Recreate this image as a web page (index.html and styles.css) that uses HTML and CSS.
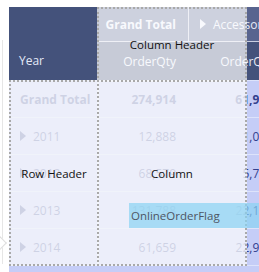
FILE: index.html
```html
<!DOCTYPE html>
<html>
<head>
    <title>Matrix field wells</title>
    <link rel="stylesheet" href="styles.css">
</head>
<body>
    <div id="page">
        <div class="pane-edge"></div>
        <div class="pane-tip"></div>

        <div id="matrix">
            <div class="cell corner">Year</div>
            <div class="cell head top num">Grand Total</div>
            <div class="cell head top split"><span class="caret"></span>Accessories</div>
            <div class="cell head num">OrderQty</div>
            <div class="cell head num">OrderQty</div>

            <div class="cell row bold">Grand Total</div>
            <div class="cell val bold">274,914</div>
            <div class="cell val bold">61,932</div>

            <div class="cell row"><span class="caret"></span>2011</div>
            <div class="cell val">12,888</div>
            <div class="cell val">1,017</div>

            <div class="cell row"><span class="caret"></span>2012</div>
            <div class="cell val">68,579</div>
            <div class="cell val">5,763</div>

            <div class="cell row"><span class="caret"></span>2013</div>
            <div class="cell val">131,788</div>
            <div class="cell val">22,152</div>

            <div class="cell row"><span class="caret"></span>2014</div>
            <div class="cell val">61,659</div>
            <div class="cell val">22,931</div>

            <div class="cell row"></div>
            <div class="cell val"></div>
            <div class="cell val"></div>
        </div>

        <div class="well well-colhead">Column Header</div>
        <div class="well well-rowhead">Row Header</div>
        <div class="well well-values">Column</div>

        <div class="ghost">OnlineOrderFlag</div>
    </div>
</body>
</html>
```

FILE: styles.css
```css
body {
    margin: 0;
    background-color: #fff;
    font-family: "Open Sans", "Noto Sans", sans-serif;
    font-size: 12px;
}
#page {
    position: relative;
    width: 259px;
    height: 272px;
    overflow: hidden;
}
.pane-edge {
    position: absolute;
    left: 2px;
    top: 40px;
    width: 1px;
    height: 224px;
    background-color: #e6e6e6;
}
.pane-tip {
    position: absolute;
    left: -10px;
    top: 236px;
    width: 13px;
    height: 13px;
    background-color: #fff;
    border-top: 1px solid #dedede;
    border-right: 1px solid #dedede;
    transform: rotate(45deg);
}
#matrix {
    display: grid;
    grid-template-columns: 90px 89px 97px;
    grid-template-rows: 35px 38px repeat(6, 37px);
    margin: 7px 0 0 9px;
    width: 276px;
    background-color: #c5cdf7;
}
.cell {
    display: flex;
    align-items: center;
    white-space: nowrap;
    overflow: hidden;
    box-sizing: border-box;
}
.corner {
    grid-row: 1 / 3;
    align-items: flex-end;
    padding: 0 0 11px 10px;
    line-height: 16px;
    background-color: #44527b;
    color: #e3e8f7;
}
.head {
    background-color: #44527b;
    color: #e6eaf7;
}
.head.top {
    background-color: #58648f;
    border-bottom: 1px solid #c9cee0;
    font-weight: bold;
}
.head.split {
    border-left: 1px solid #c9cee0;
    padding-left: 11px;
    font-weight: normal;
}
.num,
.val {
    justify-content: flex-end;
    padding-right: 12px;
}
.row,
.val {
    color: #34418e;
    border-top: 1px solid #dde3fb;
}
.row {
    padding-left: 11px;
}
.bold {
    font-weight: bold;
}
.caret {
    display: inline-block;
    width: 0;
    height: 0;
    border-left: 6px solid #34418e;
    border-top: 5px solid transparent;
    border-bottom: 5px solid transparent;
    margin-right: 7px;
}
.head .caret {
    border-left-color: #e6eaf7;
}

/* field wells drawn over the visual */
.well {
    position: absolute;
    display: flex;
    align-items: center;
    justify-content: center;
    box-sizing: border-box;
    border: 2px dotted #a9a9a9;
    background-color: rgba(245, 246, 250, 0.8);
    color: #111;
    font-size: 11.5px;
}
.well-colhead {
    left: 97px;
    top: 7px;
    width: 150px;
    height: 75px;
    background-color: rgba(255, 255, 255, 0.7);
}
.well-rowhead {
    left: 9px;
    top: 80px;
    width: 90px;
    height: 186px;
}
.well-values {
    left: 97px;
    top: 80px;
    width: 150px;
    height: 186px;
}
.ghost {
    position: absolute;
    left: 129px;
    top: 203px;
    width: 140px;
    height: 25px;
    line-height: 25px;
    padding-left: 2px;
    background-color: rgba(138, 211, 242, 0.7);
    color: #4e5563;
    font-size: 11.5px;
    white-space: nowrap;
}
```
